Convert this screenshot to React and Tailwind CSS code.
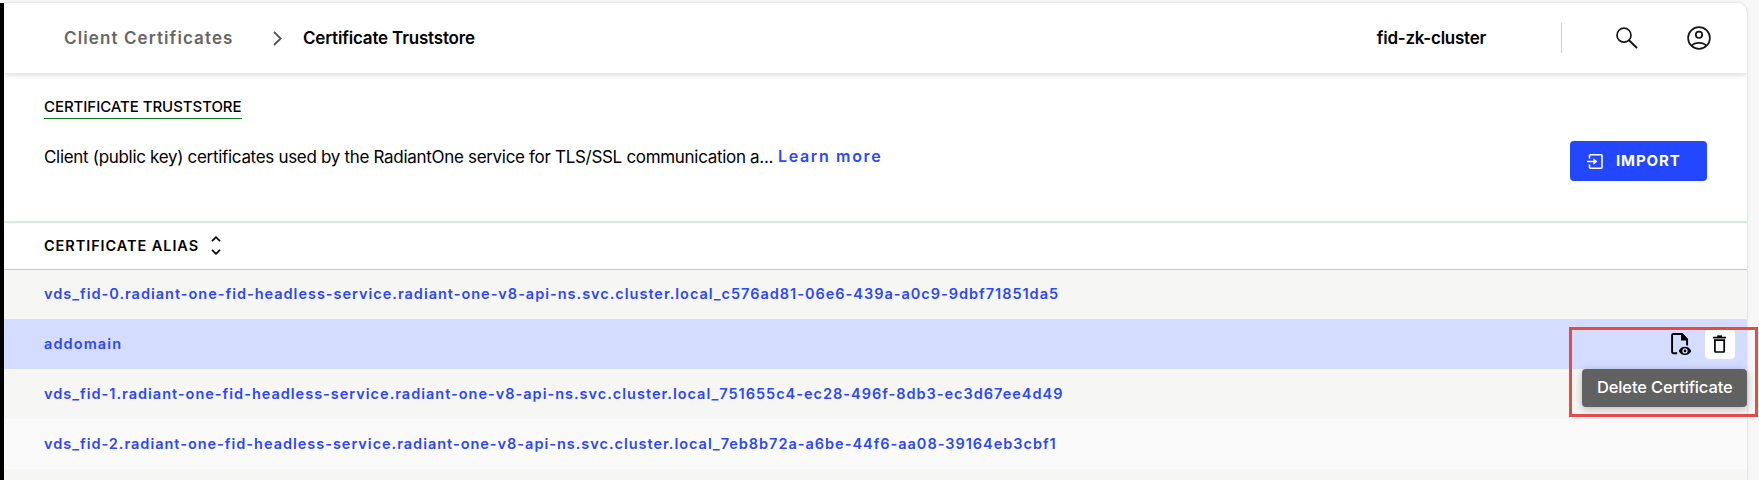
const rows = [
  {
    alias: "vds_fid-0.radiant-one-fid-headless-service.radiant-one-v8-api-ns.svc.cluster.local_c576ad81-06e6-439a-a0c9-9dbf71851da5",
    style: "h-[49px] pb-[2px] bg-[#f6f6f4] tracking-[0.985px]",
  },
  { alias: "addomain", style: "h-[50px] bg-[#d4dcff] tracking-[1.1px]", active: true },
  {
    alias: "vds_fid-1.radiant-one-fid-headless-service.radiant-one-v8-api-ns.svc.cluster.local_751655c4-ec28-496f-8db3-ec3d67ee4d49",
    style: "h-[50px] bg-[#f6f6f4] tracking-[0.993px]",
  },
  {
    alias: "vds_fid-2.radiant-one-fid-headless-service.radiant-one-v8-api-ns.svc.cluster.local_7eb8b72a-a6be-44f6-aa08-39164eb3cbf1",
    style: "h-[50px] bg-[#fafafa] tracking-[0.98px]",
  },
];

function SearchIcon() {
  return (
    <svg width="22" height="22" viewBox="0 0 22 22" fill="none" stroke="#161616" strokeWidth="1.7">
      <circle cx="8" cy="8.2" r="7" />
      <path d="M13 13.2l8 7.8" strokeWidth="2" />
    </svg>
  );
}

function AccountIcon() {
  return (
    <svg width="24" height="24" viewBox="0 0 24 24" fill="none" stroke="#161616" strokeWidth="1.7">
      <circle cx="12" cy="12" r="10.9" />
      <circle cx="12" cy="8.8" r="3.2" />
      <path d="M4.8 20c2-4.2 12.4-4.2 14.4 0" />
    </svg>
  );
}

function ImportIcon() {
  return (
    <svg width="16" height="15" viewBox="0 0 16 15" fill="none" stroke="#fff" strokeWidth="1.6">
      <path d="M2.5 4.6V1.7a.9.9 0 0 1 .9-.9h10.7a.9.9 0 0 1 .9.9v11.6a.9.9 0 0 1-.9.9H3.4a.9.9 0 0 1-.9-.9v-2.9" />
      <path d="M0 7.5h7.5" />
      <path d="M6.4 4.2l4 3.3-4 3.3z" fill="#fff" stroke="none" />
    </svg>
  );
}

function FileViewIcon() {
  return (
    <svg width="21" height="23" viewBox="0 0 21 23" fill="none">
      <path d="M6.2 20.2H2.2A1.1 1.1 0 0 1 1.1 19.1V2.1A1.1 1.1 0 0 1 2.2 1h8.4l5.5 5.5v5.9" stroke="#000" strokeWidth="1.9" />
      <path d="M10 .6V7.6h7V6L11.2.1z" fill="#000" />
      <path d="M14 13.8c-2.8 0-5.2 1.6-6.2 4.1 1 2.5 3.4 4.1 6.2 4.1s5.2-1.6 6.2-4.1c-1-2.5-3.4-4.1-6.2-4.1z" fill="#000" />
      <circle cx="14" cy="17.9" r="2" stroke="#d4dcff" strokeWidth="1.3" />
    </svg>
  );
}

function TrashIcon() {
  return (
    <svg width="14" height="18" viewBox="0 0 14 18" fill="none" stroke="#000" strokeWidth="1.7">
      <path d="M0 2.6h13" />
      <path d="M4.2 1.2h4.8" />
      <path d="M1.9 5.1h9.3v11.2a.7.7 0 0 1-.7.7H2.6a.7.7 0 0 1-.7-.7z" />
    </svg>
  );
}

export default function App() {
  return (
    <div className="relative flex h-[480px] w-[1759px] flex-col overflow-hidden bg-[#f7f7f7] pt-[3px] font-['Inter',sans-serif] text-black">
      <div className="flex min-h-0 flex-1">
        <div className="w-1 shrink-0 bg-black" />
        <main className="flex w-[1743px] shrink-0 flex-col overflow-hidden rounded-tr-[10px] bg-white shadow-[0_0_3px_rgba(0,0,0,0.16)]">
          <header className="z-10 flex h-[70px] shrink-0 items-center bg-white pr-9 shadow-[0_2px_6px_rgba(0,0,0,0.14)]">
            <nav className="flex items-center whitespace-nowrap pl-[60px] text-[17px] font-semibold">
              <a className="w-[208px] pt-0.5 tracking-[1.11px] text-[#666]">Client Certificates</a>
              <svg className="mr-5" width="11" height="15" viewBox="0 0 11 15" fill="none" stroke="#555" strokeWidth="1.8">
                <path d="M2 1l6.7 6.5L2 14" />
              </svg>
              <span className="pt-0.5 tracking-[-0.18px]">Certificate Truststore</span>
            </nav>
            <span className="ml-auto whitespace-nowrap pt-0.5 text-[17px] font-semibold tracking-[-0.25px]">fid-zk-cluster</span>
            <span className="ml-[75px] h-[30px] w-px bg-[#ccc]" />
            <span className="ml-[54px] mr-[49px]"><SearchIcon /></span>
            <AccountIcon />
          </header>

          <section className="flex h-[150px] shrink-0 justify-between border-b-2 border-[#d2efd5] pl-10 pr-10">
            <div className="flex flex-col items-start whitespace-nowrap">
              <h1 className="mt-[21px] h-[25px] border-b border-[#067a1a] text-[15px] font-medium leading-[26px] tracking-[-0.06px]">CERTIFICATE TRUSTSTORE</h1>
              <p className="mt-[25px] flex text-[17px] leading-[26px]">
                <span className="w-[734px] tracking-[-0.31px]">Client (public key) certificates used by the RadiantOne service for TLS/SSL communication a...</span>
                <a className="-mt-px text-[16px] font-semibold tracking-[1.65px] text-[#2b47ff]">Learn more</a>
              </p>
            </div>
            <button className="mt-[68px] flex h-10 w-[137px] items-center rounded-[4px] bg-[#2347ff] pl-[17px] text-[15px] font-bold tracking-[0.9px] text-white">
              <ImportIcon />
              <span className="ml-[13px]">IMPORT</span>
            </button>
          </section>

          <div className="flex h-[47px] shrink-0 items-center border-b border-[#c8c8c8] pl-10 text-[14.5px] font-semibold tracking-[0.93px]">
            <span className="w-[167px] whitespace-nowrap">CERTIFICATE ALIAS</span>
            <svg className="mb-px" width="10" height="19" viewBox="0 0 10 19" fill="none" stroke="#000" strokeWidth="1.7">
              <path d="M1 5.2l4-4 4 4M1 13.8l4 4 4-4" />
            </svg>
          </div>

          {rows.map((row) => (
            <div key={row.alias} className={`flex shrink-0 items-center justify-between pl-10 pr-3 text-[14.5px] font-semibold text-[#2b47ff] ${row.style}`}>
              <a className="whitespace-nowrap">{row.alias}</a>
              {row.active && (
                <div className="flex items-center gap-[13px]">
                  <FileViewIcon />
                  <span className="flex size-[30px] items-center justify-center rounded-[4px] bg-white"><TrashIcon /></span>
                </div>
              )}
            </div>
          ))}
          <div className="flex-1 bg-[#f6f6f4]" />
        </main>
      </div>

      <div className="absolute left-[1582px] top-[369px] flex h-[38px] w-[165px] items-center whitespace-nowrap rounded-[4px] bg-[#616161] pb-0.5 pl-[15px] text-[16.5px] font-medium tracking-[-0.13px] text-white shadow-[0_2px_8px_rgba(0,0,0,0.25)]">
        Delete Certificate
      </div>
      <div className="absolute left-[1569px] top-[327px] h-[90px] w-[189px] border-[3px] border-[#ea4a45]" />
    </div>
  );
}
